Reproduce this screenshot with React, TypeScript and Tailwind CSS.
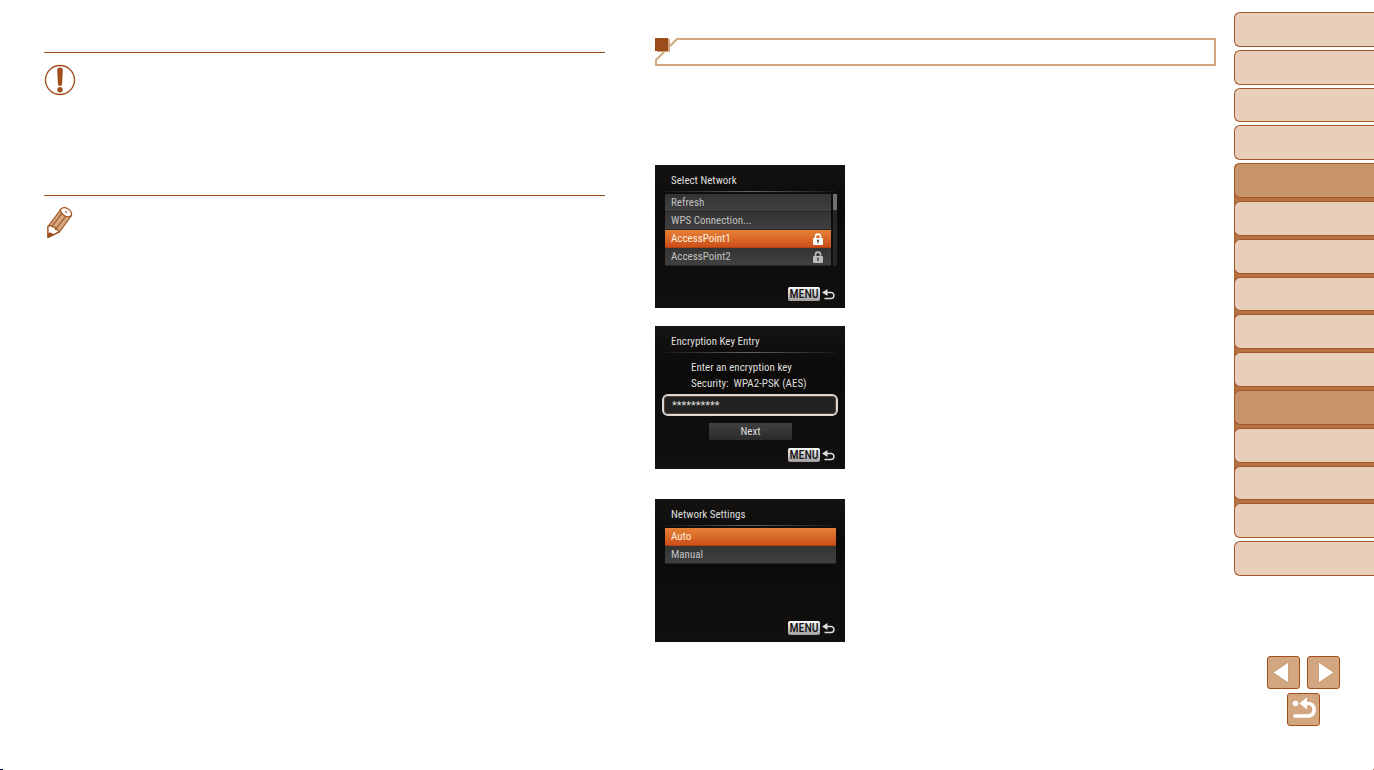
import { ReactNode } from "react";
import clsx from "clsx";

const tabs = [
  { label: "Before Use" },
  { label: "Basic Guide" },
  { label: "Advanced Guide" },
  { label: "Camera Basics" },
  { label: "Auto Mode", active: true, grouped: true },
  { label: "Other Shooting Modes", grouped: true },
  { label: "P Mode", grouped: true },
  { label: "Tv and Av Modes", grouped: true },
  { label: "Playback Mode", grouped: true },
  { label: "Movie Mode", grouped: true },
  { label: "Wi-Fi Functions", active: true, grouped: true },
  { label: "Setting Menu", grouped: true },
  { label: "Accessories", grouped: true },
  { label: "Appendix", grouped: true },
  { label: "Index" },
];

const LockIcon = ({ className }: { className?: string }) => (
  <svg viewBox="0 0 12 12" className={clsx("h-3 w-3", className)} aria-hidden="true">
    <path d="M3.5 6V3.6a2.5 2.5 0 0 1 5 0V6" fill="none" stroke="currentColor" strokeWidth="1.6" />
    <rect x="1" y="5" width="10" height="7" rx="1" fill="currentColor" />
    <path d="M5 6.8h2v1.4l-.5.6v1.7h-1V8.8L5 8.2z" fill="#5a4238" />
  </svg>
);

const MenuButton = () => (
  <button aria-label="MENU, back" className="mt-auto mr-[10px] mb-[7px] flex items-center gap-[2px] self-end">
    <span className="flex h-[14px] w-8 items-center justify-center rounded-[2px] bg-linear-to-b from-white to-[#9d9d9d] text-[12px] leading-[14px] font-medium text-[#181818]">
      MENU
    </span>
    <svg viewBox="0 0 13 11" className="h-[11px] w-[13px]" aria-hidden="true">
      <path d="M0 3.5 5.5 0v7z" fill="#ddd" />
      <path d="M4 3.5h5a2.9 2.9 0 0 1 0 5.9H2.500" fill="none" stroke="#ddd" strokeWidth="1.5" />
    </svg>
  </button>
);

const Screen = ({ title, children }: { title: string; children: ReactNode }) => (
  <section className="flex h-[143px] w-[190px] flex-col bg-linear-to-b from-[#151312] via-[#0c0b09] via-30% to-[#12100f] pt-2 font-['Liberation_Sans_Narrow','Roboto_Condensed','Roboto',sans-serif] text-[11px] leading-4 text-[#dedede]">
    <h2 className="pl-4">{title}</h2>
    <div className="mx-[10px] mt-[2px] mb-[2px] h-px bg-linear-to-r from-[#1a1918] via-[#656361] to-[#1a1918]" />
    {children}
    <MenuButton />
  </section>
);

interface RowProps {
  label: string;
  selected?: boolean;
  locked?: boolean;
}

const Row = ({ label, selected, locked }: RowProps) => (
  <li>
    <button
      className={clsx(
        "flex h-[18px] w-full items-center justify-between border-b pr-[7px] pl-[6px] text-left",
        selected
          ? "border-[#b3420f] bg-linear-to-b from-[#e58136] to-[#cc4f1a] text-[#fff0df]"
          : "border-[#252525] bg-linear-to-b from-[#343434] to-[#404040] text-[#c0c0c0]",
      )}
    >
      {label}
      {locked && <LockIcon className={selected ? "text-white" : "text-[#bcbcbc]"} />}
    </button>
  </li>
);

const NavButton = ({ label, children }: { label: string; children: ReactNode }) => (
  <button aria-label={label} className="h-[33px] w-[33px] rounded-[3px] border border-[#a34f1d] bg-[#d2a77f]">
    <svg viewBox="0 0 31 31" className="h-full w-full">
      {children}
    </svg>
  </button>
);

const WarningIcon = () => (
  <svg viewBox="0 0 32 32" className="h-8 w-8" aria-hidden="true">
    <circle cx="16" cy="16" r="14.5" fill="none" stroke="#a14f1d" strokeWidth="1.3" />
    <path d="M16 3.5c1.800 0 2.900 1 2.800 2.800l-.7 13.500c-.1 1.500-.9 2.200-2.100 2.200s-2-.7-2.100-2.200l-.7-13.500c-.1-1.800 1-2.800 2.800-2.800z" fill="#a14f1d" />
    <circle cx="16" cy="25.8" r="2.7" fill="#a14f1d" />
  </svg>
);

const PencilIcon = () => (
  <svg viewBox="0 0 26 32" className="h-8 w-[26px]" aria-hidden="true">
    <g stroke="#a14f1d" strokeWidth="1.2" strokeLinejoin="round">
      <path d="M14 2 1 19.500v11L12.500 25 24.500 8.500z" fill="#d2a77f" />
      <path d="M1 19.500v11L11.500 25c0-2-1.500-3-3-2.500 0-2-1.500-3-3-2.500-1-1.500-3-1.500-4.500-.5z" fill="#fff" />
      <path d="M5 19.500 16.500 4M8.500 22.500 20.500 7" fill="none" />
      <ellipse cx="19.200" cy="5.200" rx="6" ry="3.800" transform="rotate(32 19.200 5.200)" fill="#fff" />
      <path d="m18 4.500 2 1" />
    </g>
    <path d="M1 26v5l5.500-3.200c-1-2-3.500-3-5.500-1.800z" fill="#a14f1d" />
  </svg>
);

const SectionHeading = () => (
  <header className="flex h-[30px]">
    <svg viewBox="0 0 24 30" className="h-[30px] w-6 shrink-0" aria-hidden="true">
      <path d="M24 2h-2L1 23v5h23" fill="none" stroke="#d2a77f" strokeWidth="2" />
      <path d="M2 2h13v13H2z" fill="#d2a77f" />
      <path d="M0 1h13v13H0z" fill="#9c4c1c" />
    </svg>
    <div className="mt-px mb-px flex-1 border-y-2 border-r-2 border-[#d2a77f]" />
  </header>
);

const Sidebar = () => (
  <aside className="ml-[18px] flex w-[140px] shrink-0 flex-col pt-3">
    <nav aria-label="Chapters">
      <ul className="flex h-[567px] flex-col">
        {tabs.map(({ label, active, grouped }, i) => (
          <li
            key={label}
            className={clsx(
              "flex-1 pb-[3px]",
              grouped && i < 13 && "bg-[#b57342] shadow-[inset_1px_0_0_#a8612f]",
              i === 4 && "rounded-tl-md",
              i === 13 && "bg-linear-to-b from-[#b57342] from-50% to-transparent to-50%",
            )}
          >
            <a
              href="#"
              aria-label={label}
              className={clsx(
                "block h-full rounded-l-md border border-r-0 border-[#a5552a]",
                active ? "bg-[#c8956b]" : "bg-[#e7cfbc]",
              )}
            />
          </li>
        ))}
      </ul>
    </nav>
    <div className="mt-[77px] ml-[33px] grid w-[73px] grid-cols-2 gap-x-[7px] gap-y-1">
      <NavButton label="Previous page">
        <path d="M20.500 5v21L5 15.500z" fill="#fff" stroke="#b98052" strokeWidth="0.600" />
      </NavButton>
      <NavButton label="Next page">
        <path d="M10.500 5v21L26 15.500z" fill="#fff" stroke="#b98052" strokeWidth="0.600" />
      </NavButton>
      <div className="col-span-2 flex justify-center">
        <NavButton label="Return">
          <circle cx="7.500" cy="9.500" r="2.800" fill="#fff" />
          <path d="M17 9.500h3.500a5.500 5.500 0 0 1 5.500 5.500v1.500a5.500 5.500 0 0 1-5.500 5.500H5.500" fill="none" stroke="#fff" strokeWidth="3.600" />
          <path d="M11.500 9.500 19 3.300v12.200z" fill="#fff" />
        </NavButton>
      </div>
    </div>
  </aside>
);

export default function App() {
  return (
    <div className="flex min-h-screen flex-col bg-white">
      <main className="flex flex-1 pl-11">
        <div className="min-w-0 flex-1">
          <section className="mt-[52px] h-[143px] border-t border-[#a14f1d] pt-[11px]">
            <WarningIcon />
          </section>
          <section className="border-t border-[#a14f1d] pt-[11px] pl-[3px]">
            <PencilIcon />
          </section>
        </div>

        <div className="ml-[50px] min-w-0 flex-1 pt-[37px]">
          <SectionHeading />
          <div className="mt-[98px] flex flex-col">
            <Screen title="Select Network">
              <div className="flex gap-[2px] pr-2 pl-[10px]">
                <ul className="flex-1">
                  <Row label="Refresh" />
                  <Row label="WPS Connection..." />
                  <Row label="AccessPoint1" selected locked />
                  <Row label="AccessPoint2" locked />
                </ul>
                <div className="w-1 bg-[#262626]">
                  <div className="h-4 bg-[#707070]" />
                </div>
              </div>
            </Screen>

            <div className="mt-[18px]">
              <Screen title="Encryption Key Entry">
                <label htmlFor="key" className="mt-[5px] pl-9">
                  Enter an encryption key
                </label>
                <p className="pl-9 whitespace-pre">Security:  WPA2-PSK (AES)</p>
                <input
                  id="key"
                  type="text"
                  defaultValue="**********"
                  className="mx-[7px] mt-[2px] h-[22px] rounded-md border-2 border-[#d8d8d8] bg-[#222] px-2 text-[#dedede] outline-1 -outline-offset-3 outline-[#65432b]"
                />
                <button className="mt-[7px] ml-[54px] h-[17px] w-[83px] bg-linear-to-b from-[#404040] to-[#2b2b2b]">
                  Next
                </button>
              </Screen>
            </div>

            <div className="mt-[30px]">
              <Screen title="Network Settings">
                <ul className="mr-[9px] ml-[10px]">
                  <Row label="Auto" selected />
                  <Row label="Manual" />
                </ul>
              </Screen>
            </div>
          </div>
        </div>

        <Sidebar />
      </main>
      <footer className="flex h-px justify-between">
        <span className="w-[3px] bg-[#000050]" />
        <span className="w-px bg-[#dc8140]" />
      </footer>
    </div>
  );
}
